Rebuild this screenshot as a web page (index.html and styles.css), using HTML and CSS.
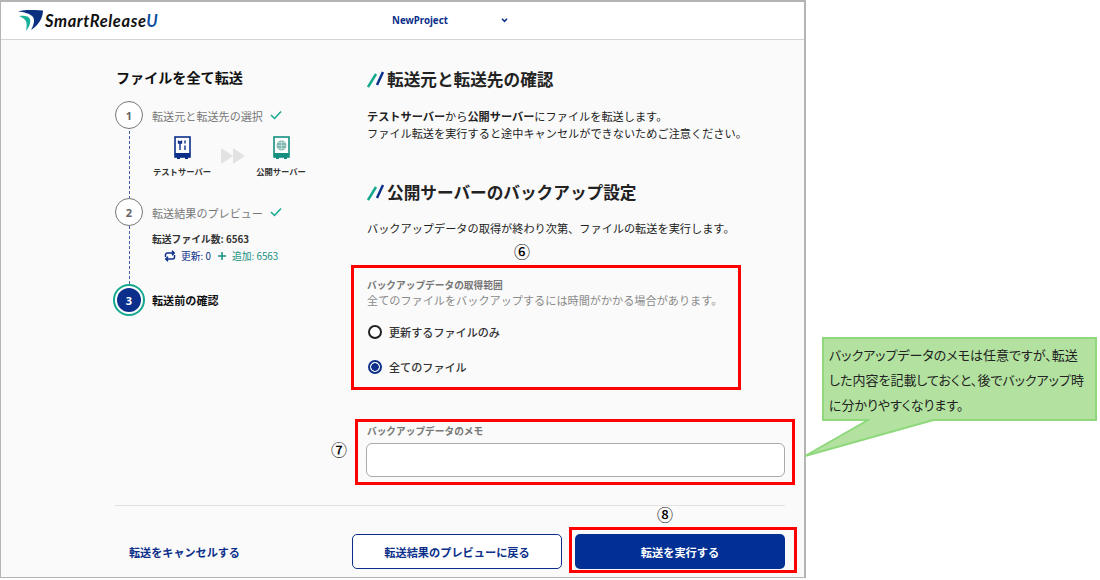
FILE: index.html
```html
<!DOCTYPE html>
<html lang="ja">
<head>
<meta charset="utf-8">
<title>SmartReleaseU</title>
<link rel="stylesheet" href="styles.css">
</head>
<body>
<div class="stage">
  <div class="app">
    <header class="topbar">
      <div class="logo">
        <svg class="logo-mark" viewBox="0 0 26 22" width="26" height="22"><path fill="#0b2f7f" d="M0 1.500C8-1 17 0 25 .5 25 8 20 16 13 20c3-5 4-10 2-13C12 3.500 6 2 0 1.500Z"/><path fill="#17b09a" d="M1 6c5-1 10 0 11 3 1 4-1 8-4 12 1-5 1-9-1-11C6 8 3 7 1 6Z"/></svg>
        <span class="logo-text">SmartRelease<span class="logo-u">U</span></span>
      </div>
      <div class="project">
        <span class="project-name">NewProject</span>
        <svg class="chev" viewBox="0 0 8 6" width="7" height="5"><path d="M1 1l3 3 3-3" fill="none" stroke="#0b2f8a" stroke-width="1.800"/></svg>
      </div>
    </header>
    <main class="body">
      <div class="columns">
        <aside class="side">
          <h1 class="side-title">ファイルを全て転送</h1>
          <div class="steps">
            <div class="step-row">
              <span class="num">1</span>
              <span class="step-label">転送元と転送先の選択</span>
              <svg class="check" viewBox="0 0 12 10" width="12" height="10"><path d="M1 5l3.500 3.500L11 1.500" fill="none" stroke="#14a88f" stroke-width="1.500"/></svg>
            </div>
            <div class="step-detail detail-1">
              <div class="server">
                <svg viewBox="0 0 17 24" width="17" height="24"><rect x="1" y="1" width="15" height="20" fill="#fff" stroke="#0b2f8a" stroke-width="1.600"/><rect x="1" y="17" width="15" height="4" fill="#0b2f8a"/><rect x="3" y="21" width="3" height="2" fill="#0b2f8a"/><rect x="11" y="21" width="3" height="2" fill="#0b2f8a"/><path d="M6 5v9M4.500 4.500v2.500h3V4.500M11 4.500v3M11 9.500v4.500" fill="none" stroke="#0b2f8a" stroke-width="1.400"/></svg>
                <span class="server-name">テストサーバー</span>
              </div>
              <div class="arrows"><i></i><i></i></div>
              <div class="server">
                <svg viewBox="0 0 17 24" width="17" height="24"><rect x="1" y="1" width="15" height="20" fill="#fff" stroke="#148f80" stroke-width="1.600"/><rect x="1" y="17" width="15" height="4" fill="#148f80"/><rect x="3" y="21" width="3" height="2" fill="#148f80"/><rect x="11" y="21" width="3" height="2" fill="#148f80"/><circle cx="8.500" cy="9.500" r="5" fill="#7fb7b0"/><path d="M3.500 9.500h10M8.500 4.500v10M5 6.500h7M5 12.500h7" stroke="#d7ebe8" stroke-width=".6" fill="none"/></svg>
                <span class="server-name">公開サーバー</span>
              </div>
            </div>
            <div class="step-row">
              <span class="num">2</span>
              <span class="step-label">転送結果のプレビュー</span>
              <svg class="check" viewBox="0 0 12 10" width="12" height="10"><path d="M1 5l3.500 3.500L11 1.500" fill="none" stroke="#14a88f" stroke-width="1.500"/></svg>
            </div>
            <div class="step-detail detail-2">
              <div class="count">転送ファイル数: 6563</div>
              <div class="diff">
                <svg viewBox="0 0 12 12" width="12" height="12"><path d="M1.500 7V5a2 2 0 0 1 2-2h6.500M8 .8 10.200 3 8 5.200M10.500 5v2a2 2 0 0 1-2 2H2M4 6.800 1.800 9 4 11.200" fill="none" stroke="#0b2f8a" stroke-width="1.500"/></svg>
                <span class="diff-up">更新: 0</span>
                <svg class="plus" viewBox="0 0 10 10" width="10" height="10"><path d="M5 1v8M1 5h8" stroke="#14907f" stroke-width="1.500"/></svg>
                <span class="diff-add">追加: 6563</span>
              </div>
            </div>
            <div class="step-row current">
              <span class="num-now"><span>3</span></span>
              <span class="step-label">転送前の確認</span>
            </div>
          </div>
        </aside>
        <section class="content">
          <h2 class="heading"><svg viewBox="0 0 17 17" width="17" height="17"><path d="M1 16L9 3" stroke="#14a88f" stroke-width="2.500"/><path d="M10 14L16 1" stroke="#0b2f8a" stroke-width="2.500"/></svg>転送元と転送先の確認</h2>
          <p class="para lead"><b>テストサーバー</b>から<b>公開サーバー</b>にファイルを転送します。<br>ファイル転送を実行すると途中キャンセルができないためご注意ください。</p>
          <h2 class="heading second"><svg viewBox="0 0 17 17" width="17" height="17"><path d="M1 16L9 3" stroke="#14a88f" stroke-width="2.500"/><path d="M10 14L16 1" stroke="#0b2f8a" stroke-width="2.500"/></svg>公開サーバーのバックアップ設定</h2>
          <p class="para notice">バックアップデータの取得が終わり次第、ファイルの転送を実行します。</p>
          <div class="field-label range-label">バックアップデータの取得範囲</div>
          <div class="hint">全てのファイルをバックアップするには時間がかかる場合があります。</div>
          <div class="radio-row first"><span class="radio"></span>更新するファイルのみ</div>
          <div class="radio-row"><span class="radio on"></span>全てのファイル</div>
          <div class="field-label memo-label">バックアップデータのメモ</div>
          <div class="memo-input"></div>
        </section>
      </div>
      <footer class="actions">
        <a class="cancel">転送をキャンセルする</a>
        <div class="buttons">
          <button class="btn ghost">転送結果のプレビューに戻る</button>
          <button class="btn solid">転送を実行する</button>
        </div>
      </footer>
    </main>
  </div>

  <div class="mark box-a"></div>
  <div class="mark box-b"></div>
  <div class="mark box-c"></div>
  <span class="no no-6">⑥</span>
  <span class="no no-7">⑦</span>
  <span class="no no-8">⑧</span>
  <div class="callout">バックアップデータのメモは任意ですが、転送<br>した内容を記載しておくと、後でバックアップ時<br>に分かりやすくなります。</div>
  <svg class="tail" viewBox="0 0 140 50" width="140" height="50"><path d="M66 0L1 37 133 0" fill="#b3e2a0" stroke="#8fd87c" stroke-width="2"/></svg>
</div>
</body>
</html>
```

FILE: styles.css
```css
* { box-sizing: border-box; }
html, body { margin: 0; padding: 0; background: #fff; }
body { font-family: "Noto Sans CJK JP", "Noto Sans", sans-serif; color: #222; }
.stage { position: relative; width: 1100px; height: 580px; overflow: hidden; }

.app { width: 806px; height: 578px; border: 1px solid #b4b4b4; border-top-width: 2px; border-right-width: 2px; background: #fafafa; display: flex; flex-direction: column; }
.topbar { height: 38px; flex: none; background: #fff; border-bottom: 1px solid #d4d4d4; display: flex; align-items: center; padding-left: 17px; }
.logo { width: 374px; display: flex; align-items: center; gap: 1px; }
.logo-mark { display: block; }
.logo-text { font-family: "Lato", sans-serif; font-style: italic; font-weight: 700; font-size: 16.500px; letter-spacing: .6px; color: #111; }
.logo-u { color: #0f4fa0; }
.project { display: flex; align-items: center; width: 116px; justify-content: space-between; }
.project-name { font-family: "Noto Sans", sans-serif; font-size: 9.700px; font-weight: 700; color: #0b2f8a; }
.chev { display: block; }

.body { flex: 1; display: flex; flex-direction: column; padding: 0 19px 0 114px; }
.columns { flex: 1; display: flex; }
.side { width: 252px; flex: none; padding-top: 26px; }
.side-title { margin: 0 0 0 1px; font-size: 14.100px; line-height: 22px; font-weight: 700; color: #111; }
.steps { margin-top: 13px; background: repeating-linear-gradient(#3f5fa8 0 3px, transparent 3px 5px) 14px 0 / 1px 100% no-repeat; }
.step-row { display: flex; align-items: center; height: 28px; color: #777; font-size: 11.100px; }
.num { width: 28px; height: 28px; flex: none; border: 1.600px solid #777; border-radius: 50%; background: #fff; display: flex; align-items: center; justify-content: center; font-family: "Noto Sans", sans-serif; font-size: 11px; font-weight: 700; color: #666; }
.step-label { margin-left: 9px; padding-top: 2px; }
.check { margin-left: 7px; }
.step-detail { padding-left: 37px; }
.detail-1 { height: 69px; padding-top: 7px; display: flex; align-items: flex-start; }
.server { width: 60px; display: flex; flex-direction: column; align-items: center; }
.server svg { display: block; }
.server-name { margin-top: 5px; font-size: 8.300px; line-height: 12px; font-weight: 700; color: #333; white-space: nowrap; }
.arrows { width: 37px; height: 16px; margin: 12px 0 0 2px; display: flex; justify-content: center; }
.arrows i { width: 0; height: 0; border-left: 12px solid #e2e2e2; border-top: 8px solid transparent; border-bottom: 8px solid transparent; }
.detail-2 { height: 60px; padding-top: 5px; }
.count { font-size: 9.800px; line-height: 16px; font-weight: 700; color: #333; }
.diff { display: flex; align-items: center; height: 18px; padding-left: 12px; font-size: 9.800px; color: #0b2f8a; }
.diff svg { flex: none; }
.diff-up { margin-left: 5px; }
.plus { margin-left: 6px; }
.diff-add { margin-left: 5px; color: #14907f; }
.current { color: #111; font-weight: 700; }
.current .step-label { margin-left: 7px; padding-top: 0; }
.num-now { width: 32px; height: 32px; flex: none; margin-left: -2px; border: 2px solid #14a88f; border-radius: 50%; background: #fff; display: flex; align-items: center; justify-content: center; }
.num-now span { width: 24px; height: 24px; border-radius: 50%; background: #0b2f8a; color: #fff; display: flex; align-items: center; justify-content: center; font-family: "Noto Sans", sans-serif; font-size: 11px; font-weight: 700; }

.content { flex: 1; padding-top: 27px; }
.heading { margin: 0; display: flex; align-items: center; gap: 3px; height: 24px; font-size: 16.650px; font-weight: 700; color: #222; }
.second { margin-top: 38px; }
.para { margin: 0; font-size: 11.180px; line-height: 17px; color: #222; }
.lead { margin-top: 17px; }
.notice { margin-top: 16px; }
.field-label { font-size: 9.700px; line-height: 14px; font-weight: 700; color: #777; }
.range-label { margin-top: 41px; }
.hint { font-size: 11.150px; line-height: 16px; color: #8a8a8a; }
.radio-row { display: flex; align-items: center; height: 20px; margin-top: 15px; font-size: 11.100px; font-weight: 500; color: #333; }
.radio-row.first { margin-top: 14px; }
.radio { width: 14px; height: 14px; margin: 0 7px 0 1px; flex: none; border: 2px solid #222; border-radius: 50%; background: #fff; }
.radio.on { border-color: #0b2f8a; background: radial-gradient(circle, #0b2f8a 0 3.500px, #fff 4px); }
.memo-label { margin-top: 47px; }
.memo-input { margin: 5px 0 0 -1px; width: 419px; height: 34px; border: 1.500px solid #aaa; border-radius: 6px; background: #fff; }

.actions { flex: none; height: 72px; border-top: 1px solid #e2e2e2; display: flex; justify-content: space-between; align-items: flex-start; padding-top: 28px; }
.cancel { margin: 10px 0 0 14px; font-size: 11.100px; font-weight: 700; color: #0b2f8a; }
.buttons { display: flex; gap: 13px; }
.btn { width: 210px; height: 35px; border-radius: 5px; font-family: inherit; font-size: 11.200px; font-weight: 700; padding: 0; }
.ghost { background: #fff; border: 1.500px solid #0b2f8a; color: #0b2f8a; }
.solid { background: #003093; border: 0; color: #fff; }

.mark { position: absolute; border: 3px solid #f00; }
.box-a { left: 351px; top: 265px; width: 390px; height: 125px; }
.box-b { left: 355px; top: 419px; width: 440px; height: 66px; }
.box-c { left: 569px; top: 527px; width: 228px; height: 46px; }
.no { position: absolute; font-size: 16px; font-weight: 500; line-height: 18px; color: #000; }
.no-6 { left: 514px; top: 242px; }
.no-7 { left: 331px; top: 440px; }
.no-8 { left: 657px; top: 505px; }
.tail { position: absolute; left: 804px; top: 419px; }
.callout { position: absolute; left: 822px; top: 337px; width: 275px; height: 84px; background: #b3e2a0; border: 2px solid #8fd87c; padding: 3px 0 0 5px; font-size: 13px; line-height: 25px; color: #222; font-feature-settings: "palt"; white-space: nowrap; }
```
